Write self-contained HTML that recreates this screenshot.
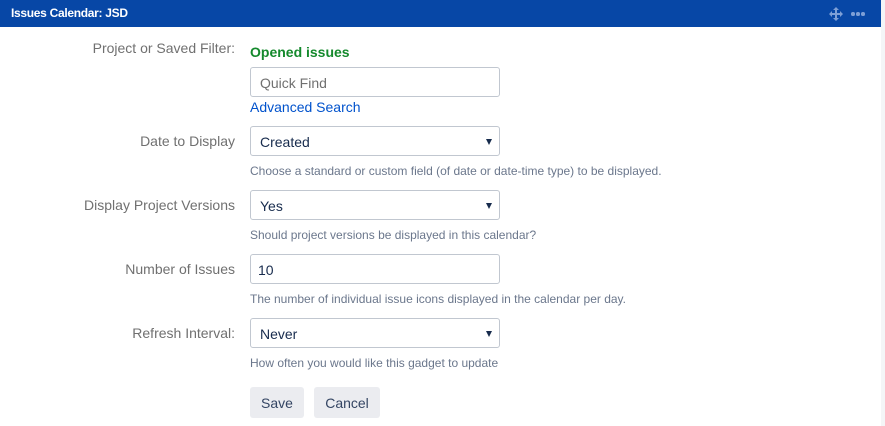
<!DOCTYPE html>
<html><head><style>
*{box-sizing:border-box;margin:0;padding:0}
body{width:885px;height:426px;background:#f4f5f7;font-family:"Liberation Sans",Arial,sans-serif;position:relative;overflow:hidden}
.panel{position:absolute;left:0;top:0;width:881px;height:426px;background:#fff}
.hdr{position:absolute;left:0;top:0;width:881px;height:27px;background:#0747a6;color:#fff;font-weight:bold;font-size:12px;line-height:27px;padding-left:11px;letter-spacing:-0.3px}
.lbl{position:absolute;right:646px;font-size:14px;color:#707070;white-space:nowrap}
.abs{position:absolute;white-space:nowrap}
.in{position:absolute;left:250px;width:250px;height:30px;border:1px solid #c1c7d0;border-radius:3px;font-size:14px;color:#172b4d;line-height:30px;padding-left:9px;background:#fff}
.in.sel:after{content:"";position:absolute;right:7px;top:12px;border-left:3.5px solid transparent;border-right:3.5px solid transparent;border-top:6px solid #172b4d}
.desc{position:absolute;left:250px;font-size:12px;color:#6b778c;white-space:nowrap}
.btn{position:absolute;top:387px;height:31px;background:#ebecf0;border-radius:3px;font-size:14px;color:#344563;line-height:32px;text-align:center}
</style></head><body>
<div class="panel">
<div class="hdr">Issues Calendar: JSD</div>
<svg style="position:absolute;left:829px;top:7px" width="14" height="14" viewBox="0 0 14 14" fill="#7d9fd6"><path d="M7 0l3 3H8v3h3V4l3 3-3 3V8H8v3h2l-3 3-3-3h2V8H3v2L0 7l3-3v2h3V3H4z"/></svg>
<div class="abs" style="left:851px;top:12px;width:14px;height:4px"><span style="position:absolute;left:0;width:3.5px;height:3.5px;border-radius:50%;background:#7d9fd6"></span><span style="position:absolute;left:5px;width:3.5px;height:3.5px;border-radius:50%;background:#7d9fd6"></span><span style="position:absolute;left:10px;width:3.5px;height:3.5px;border-radius:50%;background:#7d9fd6"></span></div>

<div class="lbl" style="top:40px">Project or Saved Filter:</div>
<div class="abs" style="left:250px;top:44px;font-size:14px;font-weight:bold;color:#14892c">Opened issues</div>
<div class="in" style="top:67px;color:#707070">Quick Find</div>
<div class="abs" style="left:250px;top:99px;font-size:14px;color:#0052cc">Advanced Search</div>

<div class="lbl" style="top:133px">Date to Display</div>
<div class="in sel" style="top:126px">Created</div>
<div class="desc" style="top:164px">Choose a standard or custom field (of date or date-time type) to be displayed.</div>

<div class="lbl" style="top:197px">Display Project Versions</div>
<div class="in sel" style="top:190px">Yes</div>
<div class="desc" style="top:228px">Should project versions be displayed in this calendar?</div>

<div class="lbl" style="top:261px">Number of Issues</div>
<div class="in" style="top:254px;padding-left:7px">10</div>
<div class="desc" style="top:292px">The number of individual issue icons displayed in the calendar per day.</div>

<div class="lbl" style="top:325px">Refresh Interval:</div>
<div class="in sel" style="top:318px">Never</div>
<div class="desc" style="top:356px">How often you would like this gadget to update</div>

<div class="btn" style="left:250px;width:54px">Save</div>
<div class="btn" style="left:314px;width:66px">Cancel</div>
</div>
</body></html>
